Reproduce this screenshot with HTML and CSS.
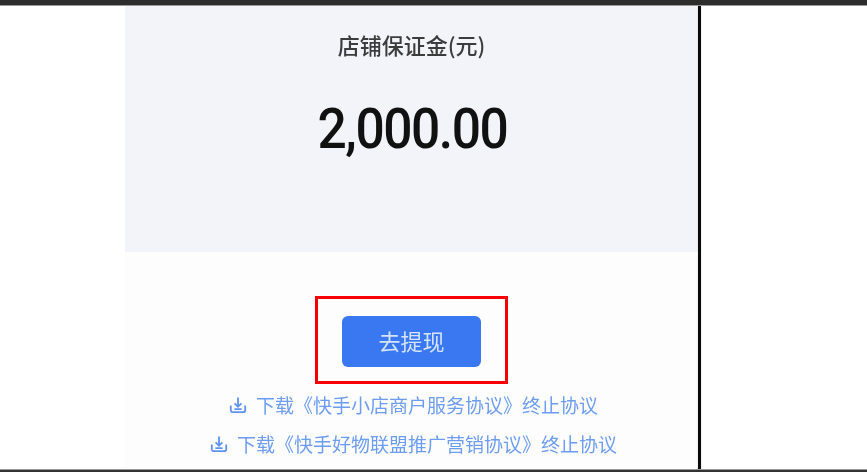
FILE: index.html
```html
<!DOCTYPE html>
<html lang="zh-CN">
<head>
  <meta charset="UTF-8">
  <meta name="viewport" content="width=device-width, initial-scale=1.0">
  <title>店铺保证金</title>
  <link rel="stylesheet" href="styles.css">
</head>
<body>
  <div class="bar-top"></div>
  <div class="page">
    <div class="side-left"></div>
    <main class="panel">
      <section class="deposit">
        <div class="deposit-label">店铺保证金(元)</div>
        <div class="deposit-amount">2,000.00</div>
      </section>
      <section class="actions">
        <div class="highlight-box">
          <button class="button" type="button"><span>去提现</span></button>
        </div>
        <a class="download first" href="#">
          <svg class="download-icon" viewBox="0 0 18 18"><path d="M9 1.5v9M5.6 7.4 9 10.8l3.4-3.4M1.8 9.5v4.7a2 2 0 0 0 2 2h10.4a2 2 0 0 0 2-2V9.5M5.4 13.2h7.2"/></svg>
          <span>下载《快手小店商户服务协议》终止协议</span>
        </a>
        <a class="download" href="#">
          <svg class="download-icon" viewBox="0 0 18 18"><path d="M9 1.5v9M5.6 7.4 9 10.8l3.4-3.4M1.8 9.5v4.7a2 2 0 0 0 2 2h10.4a2 2 0 0 0 2-2V9.5M5.4 13.2h7.2"/></svg>
          <span>下载《快手好物联盟推广营销协议》终止协议</span>
        </a>
      </section>
    </main>
    <div class="divider"></div>
    <div class="side-right"></div>
  </div>
  <div class="bar-bottom"></div>
</body>
</html>
```

FILE: styles.css
```css
html, body {
  height: 100%;
}
body {
  margin: 0;
  display: flex;
  flex-direction: column;
  overflow: hidden;
  background-color: #fff;
  font-family: "Noto Sans CJK SC", "Noto Sans", sans-serif;
}
.bar-top {
  height: 5px;
  background-color: #2d2d2d;
  border-bottom: 1px solid #9a9a9a;
}
.bar-bottom {
  height: 2px;
  background-color: #333;
  border-top: 1px solid #9a9a9a;
}
.page {
  flex: 1;
  display: flex;
  min-height: 0;
}
.side-left {
  width: 125px;
}
.side-right {
  flex: 1;
}
.panel {
  width: 573px;
  display: flex;
  flex-direction: column;
  background-color: #fdfdfe;
}
.divider {
  width: 3px;
  background-color: #0a0a0a;
  box-shadow: 0 0 1px #888;
}
.deposit {
  height: 246px;
  box-sizing: border-box;
  padding-top: 22px;
  background-color: #f3f4f9;
  text-align: center;
}
.deposit-label {
  font-size: 22px;
  line-height: 32px;
  color: #3c3c3c;
  font-weight: 500;
  filter: blur(0.7px);
}
.deposit-amount {
  margin-top: 36px;
  padding-left: 2px;
  font-family: Roboto, sans-serif;
  font-size: 56px;
  line-height: 66px;
  font-weight: 500;
  letter-spacing: -1.6px;
  color: #111;
  transform: scaleX(0.92);
  filter: blur(0.7px);
}
.actions {
  flex: 1;
  display: flex;
  flex-direction: column;
  align-items: center;
  padding-top: 44px;
}
.highlight-box {
  padding: 17px 24px 14px;
  border: 3px solid #f60000;
}
.button {
  display: block;
  width: 139px;
  height: 51px;
  padding: 0 0 3px;
  border: none;
  border-radius: 6px;
  background-color: #3a78f2;
  color: #d5e3fb;
  font-family: inherit;
  font-size: 22px;
}
.button span {
  display: block;
  filter: blur(0.6px);
}
.download {
  display: flex;
  align-items: center;
  gap: 9px;
  height: 39px;
  padding-left: 4px;
  font-size: 19px;
  color: #6d9df0;
  text-decoration: none;
  filter: blur(0.7px);
}
.download.first {
  margin-top: 1px;
}
.download-icon {
  width: 18px;
  height: 18px;
  fill: none;
  stroke: #5f93ee;
  stroke-width: 1.8;
}
```
